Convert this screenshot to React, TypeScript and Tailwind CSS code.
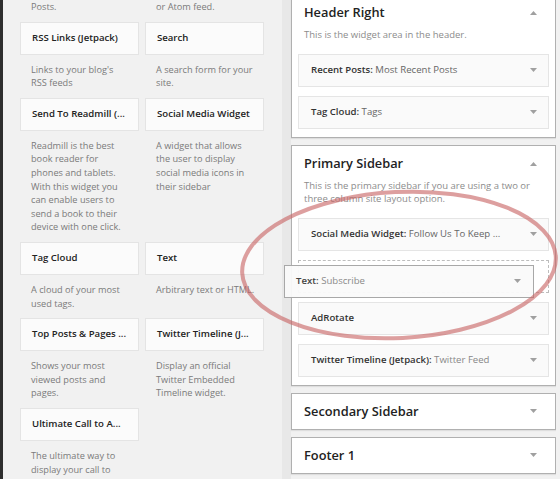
import React from "react";

const Down = () => (
  <svg width="7" height="4" viewBox="0 0 7 4" className="shrink-0">
    <polygon points="0,0 7,0 3.5,4" fill="#a0a0a0" />
  </svg>
);
const Up = () => (
  <svg width="7" height="4" viewBox="0 0 7 4" className="shrink-0">
    <polygon points="0,4 7,4 3.5,0" fill="#a0a0a0" />
  </svg>
);

type W = { title: string; desc: string[] };

const rows: [W, W | null][] = [
  [
    { title: "RSS Links (Jetpack)", desc: ["Links to your blog's", "RSS feeds"] },
    { title: "Search", desc: ["A search form for your", "site."] },
  ],
  [
    {
      title: "Send To Readmill (...",
      desc: [
        "Readmill is the best",
        "book reader for",
        "phones and tablets.",
        "With this widget you",
        "can enable users to",
        "send a book to their",
        "device with one click.",
      ],
    },
    {
      title: "Social Media Widget",
      desc: ["A widget that allows", "the user to display", "social media icons in", "their sidebar"],
    },
  ],
  [
    { title: "Tag Cloud", desc: ["A cloud of your most", "used tags."] },
    { title: "Text", desc: ["Arbitrary text or HTML."] },
  ],
  [
    { title: "Top Posts & Pages ...", desc: ["Shows your most", "viewed posts and", "pages."] },
    { title: "Twitter Timeline (J...", desc: ["Display an official", "Twitter Embedded", "Timeline widget."] },
  ],
  [{ title: "Ultimate Call to A...", desc: ["The ultimate way to", "display your call to"] }, null],
];

const Desc = ({ lines }: { lines: string[] }) => (
  <div className="pt-[8px] pb-[8px] pl-[11px] text-[9.2px] leading-[13.6px] text-[#7a7a7a] whitespace-nowrap">
    {lines.map((l, i) => (
      <div key={i}>{l}</div>
    ))}
  </div>
);

const Card = ({ w }: { w: W }) => (
  <div>
    <div className="h-[33px] border border-[#e4e4e4] bg-[#fbfbfb] flex items-center pl-[11px] text-[9.6px] font-semibold text-[#222] whitespace-nowrap overflow-hidden">
      {w.title}
    </div>
    <Desc lines={w.desc} />
  </div>
);

const Row = ({ b, n, muted }: { b: string; n: string; muted?: boolean }) => (
  <div className="h-[33px] border border-[#e5e5e5] bg-[#fafafa] flex items-center justify-between pl-[12px] pr-[11px] text-[9.6px] whitespace-nowrap">
    <span>
      <span className="font-semibold text-[#333]">{b}</span>
      <span className={muted ? "text-[#888]" : "text-[#666]"}>{n}</span>
    </span>
    <Down />
  </div>
);

const Section = ({
  title,
  desc,
  children,
}: {
  title: string;
  desc: string[];
  children: React.ReactNode;
}) => (
  <div className="border border-[#b0b0b0] bg-white shadow-[0_1px_1px_rgba(0,0,0,0.08)] px-[6px] pb-[8px]">
    <div className="h-[20px] mt-[8px] flex items-center justify-between pl-[6px] pr-[12px]">
      <span className="text-[12.8px] font-semibold text-[#222]">{title}</span>
      <Up />
    </div>
    <div className="mt-[5px] mb-[12px] pl-[6px] text-[9.5px] leading-[13.6px] text-[#8c8c8c] whitespace-nowrap">
      {desc.map((d, i) => (
        <div key={i}>{d}</div>
      ))}
    </div>
    <div className="flex flex-col gap-[9px]">{children}</div>
  </div>
);

const Collapsed = ({ title }: { title: string }) => (
  <div className="h-[37px] border border-[#b0b0b0] bg-white shadow-[0_1px_1px_rgba(0,0,0,0.08)] flex items-center justify-between pl-[12px] pr-[18px]">
    <span className="text-[12.8px] font-semibold text-[#222]">{title}</span>
    <Down />
  </div>
);

export default function App() {
  return (
    <div
      className="relative w-[560px] h-[479px] overflow-hidden flex bg-[#f1f1f1]"
      style={{ fontFamily: '"Open Sans", "Noto Sans", sans-serif' }}
    >
      <div className="w-[282px] shrink-0 border-l-[3px] border-[#2e2e2e] pl-[17px]">
        <div className="grid grid-cols-[119px_119px] gap-x-[6px]">
          <div className="pl-[11px] pb-[8px] text-[9.2px] leading-[13.6px] text-[#7a7a7a]">Posts.</div>
          <div className="pl-[11px] pb-[8px] text-[9.2px] leading-[13.6px] text-[#7a7a7a]">or Atom feed.</div>
          {rows.map(([a, b], i) => (
            <React.Fragment key={i}>
              <Card w={a} />
              {b ? <Card w={b} /> : <div />}
            </React.Fragment>
          ))}
        </div>
      </div>
      <div className="w-[9px] shrink-0 bg-[#e8e8e8]" />
      <div className="w-[265px] shrink-0 -mt-[6px] flex flex-col gap-[7px]">
        <Section title="Header Right" desc={["This is the widget area in the header."]}>
          <Row b="Recent Posts:" n=" Most Recent Posts" />
          <Row b="Tag Cloud:" n=" Tags" />
        </Section>
        <Section
          title="Primary Sidebar"
          desc={["This is the primary sidebar if you are using a two or", "three column site layout option."]}
        >
          <Row b="Social Media Widget:" n=" Follow Us To Keep ..." />
          <div className="relative h-[33px] border border-dashed border-[#bdbdbd]">
            <div className="absolute left-[-15px] top-[4px] w-[250px] h-[33px] border border-[#a8a8a8] bg-[#fafafa]/95 flex items-center justify-between pl-[11px] pr-[12px] text-[9.6px] whitespace-nowrap">
              <span>
                <span className="font-semibold text-[#444]">Text:</span>
                <span className="text-[#8a8a8a]"> Subscribe</span>
              </span>
              <Down />
            </div>
          </div>
          <Row b="AdRotate" n="" />
          <Row b="Twitter Timeline (Jetpack):" n=" Twitter Feed" muted />
        </Section>
        <Collapsed title="Secondary Sidebar" />
        <Collapsed title="Footer 1" />
      </div>
      <div className="flex-1 bg-[#f1f1f1]" />
      <svg className="absolute inset-0 pointer-events-none" width="560" height="479" viewBox="0 0 560 479">
        <ellipse
          cx="399"
          cy="265"
          rx="157"
          ry="73"
          transform="rotate(-3 399 265)"
          fill="none"
          stroke="rgba(200,100,100,0.62)"
          strokeWidth="4"
        />
      </svg>
    </div>
  );
}
